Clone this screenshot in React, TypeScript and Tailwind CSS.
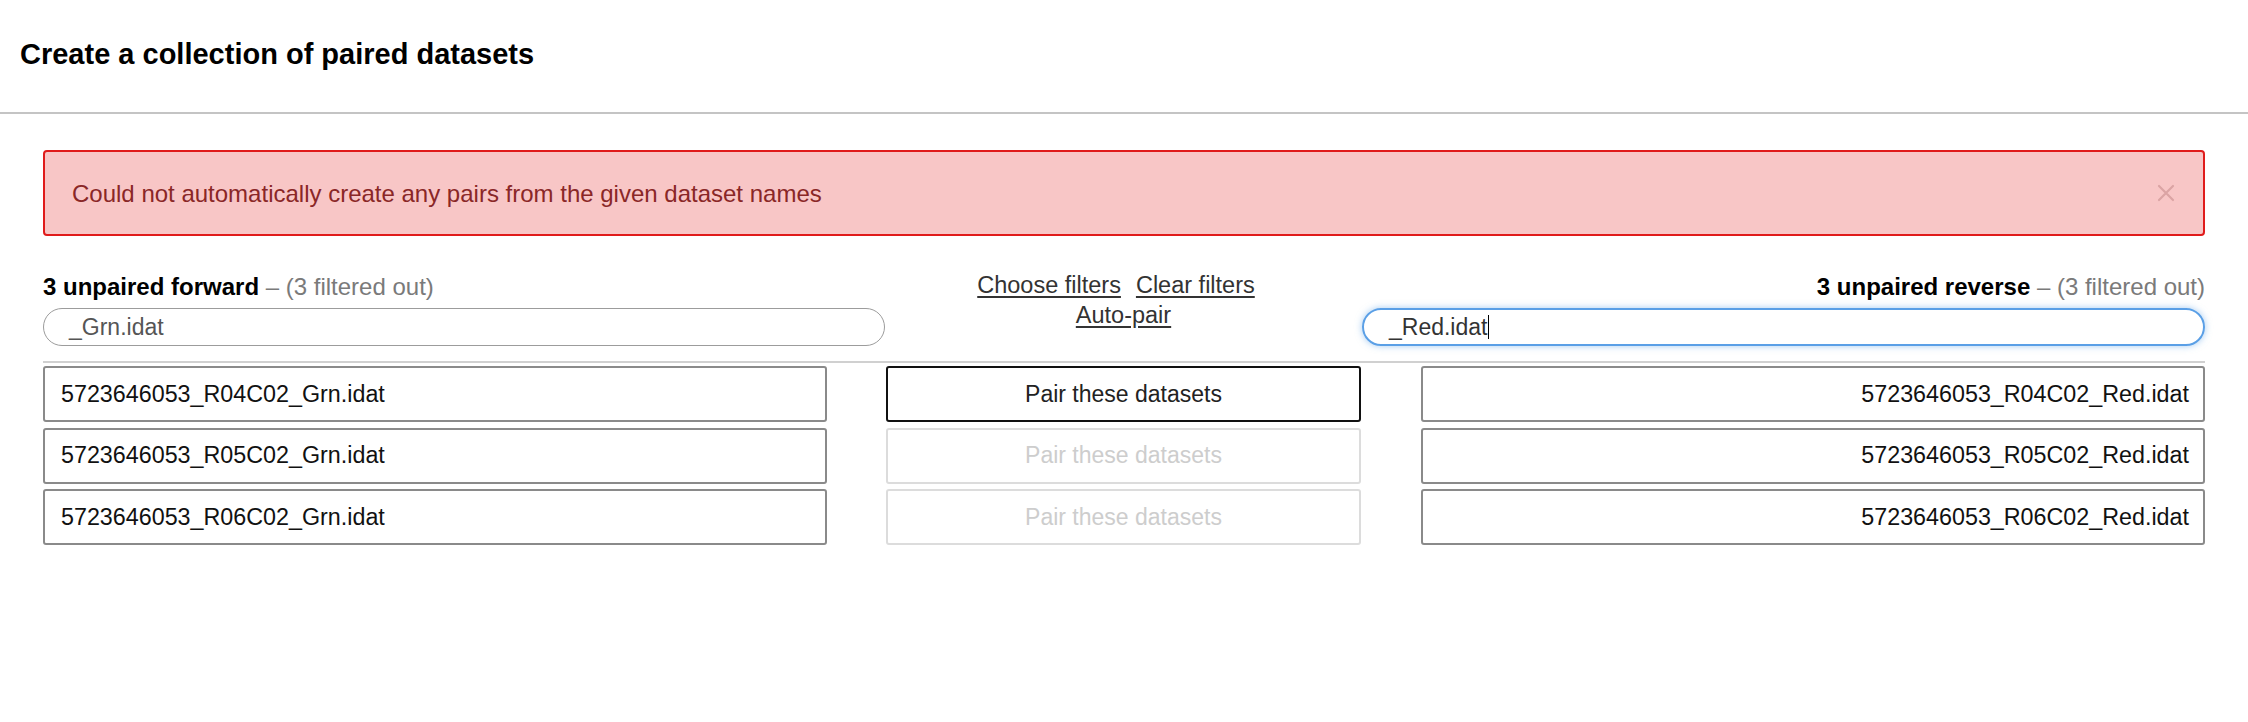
import React from "react";

const rows = [
  { f: "5723646053_R04C02_Grn.idat", r: "5723646053_R04C02_Red.idat", active: true },
  { f: "5723646053_R05C02_Grn.idat", r: "5723646053_R05C02_Red.idat", active: false },
  { f: "5723646053_R06C02_Grn.idat", r: "5723646053_R06C02_Red.idat", active: false },
];

export default function App() {
  return (
    <div className="w-full min-h-[722px] bg-white font-['Liberation_Sans',Arial,sans-serif] text-[#222]">
      <div className="h-[114px] flex items-center pl-[20px] pb-[3px] border-b-2 border-[#c4c4c4]">
        <h1 className="text-[29px] font-bold text-black leading-none">Create a collection of paired datasets</h1>
      </div>

      <div className="px-[43px]">
        <div className="mt-[36px] h-[86px] flex items-center justify-between rounded-[4px] border-2 border-[#e01b1b] bg-[#f8c6c6] pl-[27px] pr-[28px]">
          <span className="text-[24px] text-[#8a2727] pt-[2px]">Could not automatically create any pairs from the given dataset names</span>
          <svg width="18" height="18" viewBox="0 0 18 18" className="shrink-0">
            <path d="M2 2 L16 16 M16 2 L2 16" stroke="#dba4a4" strokeWidth="2.2" strokeLinecap="round" />
          </svg>
        </div>

        <div className="mt-[34px] grid grid-cols-[842px_1fr_843px] items-start">
          <div className="flex flex-col">
            <div className="h-[34px] leading-[34px] text-[24px] whitespace-nowrap">
              <span className="font-bold text-black">3 unpaired forward</span>
              <span className="text-[#7a7a7a]"> – (3 filtered out)</span>
            </div>
            <div className="mt-[4px] h-[38px] rounded-full border-[1.5px] border-[#9c9c9c] flex items-center pl-[25px] text-[23px] text-[#555]">
              _Grn.idat
            </div>
          </div>

          <div className="flex flex-col items-center text-[23.5px] text-[#333] leading-[30px]">
            <div className="flex gap-[15px] pr-[15px]">
              <span className="underline underline-offset-[3px]">Choose filters</span>
              <span className="underline underline-offset-[3px]">Clear filters</span>
            </div>
            <span className="underline underline-offset-[3px]">Auto-pair</span>
          </div>

          <div className="flex flex-col">
            <div className="h-[34px] leading-[34px] text-[24px] whitespace-nowrap text-right">
              <span className="font-bold text-black">3 unpaired reverse</span>
              <span className="text-[#7a7a7a]"> – (3 filtered out)</span>
            </div>
            <div className="mt-[4px] h-[38px] rounded-full border-2 border-[#5a9fe6] shadow-[0_0_7px_rgba(90,160,230,0.55)] flex items-center pl-[25px] text-[23px] text-[#333]">
              _Red.idat
              <span className="inline-block w-[1px] h-[24px] bg-black ml-[1px]" />
            </div>
          </div>
        </div>

        <div className="mt-[15px] h-[2px] bg-[#d0d0d0]" />

        <div className="mt-[3px] flex flex-col gap-[5.5px]">
          {rows.map((row, i) => (
            <div key={i} className="grid grid-cols-[842px_1fr_843px] h-[56px]">
              <div className="w-[784px] h-full rounded-[3px] border-2 border-[#8a8a8a] flex items-center pl-[16px] text-[23.3px] text-[#111]">
                {row.f}
              </div>
              <div className="mx-[1px] h-full">
                {row.active ? (
                  <div className="h-full rounded-[3px] border-2 border-[#111] flex items-center justify-center text-[23px] text-[#222]">
                    Pair these datasets
                  </div>
                ) : (
                  <div className="h-full rounded-[3px] border-2 border-[#dcdcdc] flex items-center justify-center text-[23px] text-[#cdcdcd]">
                    Pair these datasets
                  </div>
                )}
              </div>
              <div className="ml-[59px] w-[784px] h-full rounded-[3px] border-2 border-[#8a8a8a] flex items-center justify-end pr-[14px] text-[23.3px] text-[#111]">
                {row.r}
              </div>
            </div>
          ))}
        </div>
      </div>
    </div>
  );
}
